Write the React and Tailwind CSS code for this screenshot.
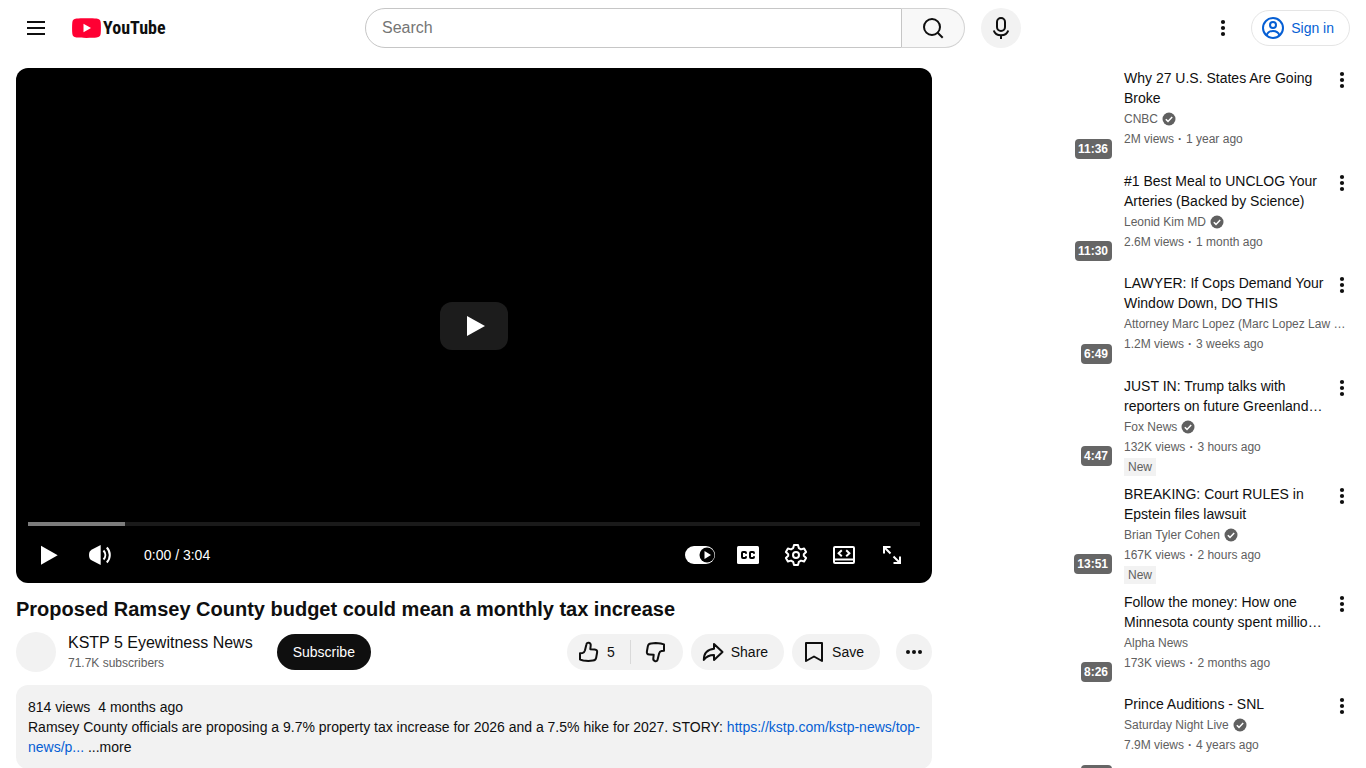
import clsx from 'clsx';

const videos = [
  { title: 'Why 27 U.S. States Are Going Broke', channel: 'CNBC', verified: true, views: '2M views', age: '1 year ago', time: '11:36' },
  { title: '#1 Best Meal to UNCLOG Your Arteries (Backed by Science)', channel: 'Leonid Kim MD', verified: true, views: '2.6M views', age: '1 month ago', time: '11:30' },
  { title: 'LAWYER: If Cops Demand Your Window Down, DO THIS', channel: 'Attorney Marc Lopez (Marc Lopez Law …', views: '1.2M views', age: '3 weeks ago', time: '6:49' },
  { title: 'JUST IN: Trump talks with reporters on future Greenland…', channel: 'Fox News', verified: true, views: '132K views', age: '3 hours ago', time: '4:47', isNew: true },
  { title: 'BREAKING: Court RULES in Epstein files lawsuit', channel: 'Brian Tyler Cohen', verified: true, views: '167K views', age: '2 hours ago', time: '13:51', isNew: true },
  { title: 'Follow the money: How one Minnesota county spent millio…', channel: 'Alpha News', views: '173K views', age: '2 months ago', time: '8:26' },
  { title: 'Prince Auditions - SNL', channel: 'Saturday Night Live', verified: true, views: '7.9M views', age: '4 years ago', time: '5:12' },
];

function Icon({ children, className }) {
  return (
    <svg viewBox="0 0 24 24" aria-hidden="true" className={clsx('w-6 h-6 shrink-0', className)} fill="none" stroke="currentColor" strokeWidth="2" strokeLinejoin="round">
      {children}
    </svg>
  );
}

function DotsIcon() {
  return (
    <Icon>
      <g fill="currentColor" stroke="none">
        <circle cx="12" cy="6" r="2.1" />
        <circle cx="12" cy="12" r="2.1" />
        <circle cx="12" cy="18" r="2.1" />
      </g>
    </Icon>
  );
}

function ThumbIcon({ className }) {
  return (
    <Icon className={className}>
      <path d="M3 13.2 5.500 12.900c1.400-.2 2-1 2.400-2.400L9.400 4.500C9.700 3 10.600 2.500 11.800 2.800c1.500.4 2.100 1.300 1.900 2.800L13.300 9.200l4.500.3c1.900.1 2.600 1.300 2.300 3l-.9 5.200c-.3 1.900-1.400 2.800-3.300 2.900l-4.600.3-5-.4-3.300-.9z" />
    </Icon>
  );
}

function Header() {
  return (
    <header className="flex items-center h-14 px-4">
      <div className="flex flex-1 items-center gap-4">
        <button aria-label="Guide" className="flex items-center justify-center w-10 h-10 rounded-full">
          <Icon><path d="M3 6h18M3 12h18M3 18h18" /></Icon>
        </button>
        <a href="#" className="flex items-center gap-0.5">
          <svg viewBox="0 0 29 20" aria-hidden="true" className="w-[29px] h-5">
            <path d="M4.500.5C8 0 21 0 24.500.5 27.500.8 28.400 2 28.700 4.500c.3 3 .3 8 0 11-.3 2.500-1.200 3.700-4.200 4-3.500.5-16.500.5-20 0-3-.3-3.900-1.500-4.200-4-.3-3-.3-8 0-11C.6 2 1.500.8 4.500.5z" fill="#ff0033" />
            <path d="M11.500 5.800v8.400L19 10z" fill="#fff" />
          </svg>
          <span className="font-['Roboto_Condensed','Open_Sans_Condensed','Noto_Sans_Condensed','Liberation_Sans',sans-serif] font-bold text-lg leading-5">YouTube</span>
        </a>
      </div>

      <div className="flex w-[676px] pl-5 gap-4">
        <form className="flex flex-1 h-10" onSubmit={(e) => e.preventDefault()}>
          <input
            aria-label="Search"
            placeholder="Search"
            className="flex-1 min-w-0 pl-4 pr-1 text-base border border-[#c6c6c6] rounded-l-full placeholder:text-[#757575] outline-none"
          />
          <button aria-label="Search" className="flex items-center justify-center w-[63px] bg-[#f8f8f8] border border-l-0 border-[#d3d3d3] rounded-r-full">
            <Icon><circle cx="11" cy="11" r="8" /><path d="m16.700 16.700 5 5" /></Icon>
          </button>
        </form>
        <button aria-label="Search with your voice" className="flex items-center justify-center w-10 h-10 rounded-full bg-[#f2f2f2]">
          <Icon>
            <rect x="8" y="2" width="8" height="13" rx="4" />
            <path d="M4.800 14.500c.9 3 3.800 4.800 7.200 4.800s6.300-1.800 7.200-4.800M12 19.300V23" />
          </Icon>
        </button>
      </div>

      <div className="flex flex-1 items-center justify-end gap-2">
        <button aria-label="Settings" className="flex items-center justify-center w-10 h-10"><DotsIcon /></button>
        <a href="#" className="flex items-center gap-1.5 h-9 pl-[9px] pr-[15px] border border-[#e5e5e5] rounded-full text-sm text-[#065fd4]">
          <Icon>
            <circle cx="12" cy="12" r="10" />
            <circle cx="12" cy="9" r="3" />
            <path d="M5.500 19.300c1-2.700 3.500-4.300 6.500-4.300s5.500 1.600 6.500 4.300" />
          </Icon>
          Sign in
        </a>
      </div>
    </header>
  );
}

function ControlButton({ label, children }) {
  return (
    <button aria-label={label} className="flex items-center justify-center w-12 h-12">
      <Icon>{children}</Icon>
    </button>
  );
}

function Player() {
  return (
    <div className="relative flex flex-col justify-end aspect-video px-3 pb-1 bg-black rounded-xl text-white">
      <button aria-label="Play" className="absolute inset-0 m-auto flex items-center justify-center w-[68px] h-12 rounded-xl bg-[#1c1c1c]">
        <svg viewBox="0 0 18 20" className="w-[18px] h-5 ml-1" fill="#fff"><path d="M0 0v20l18-10z" /></svg>
      </button>
      <div className="h-1 mb-[5px] bg-[#1a1a1a]">
        <div className="h-1 bg-[#7c7c7c]" style={{ width: '10.9%' }} />
      </div>
      <div className="flex items-center -ml-1 pr-1">
        <div className="flex flex-1 items-center gap-1">
          <ControlButton label="Play">
            <path d="M5 2.700v19l16.700-9.500z" fill="currentColor" stroke="none" />
          </ControlButton>
          <ControlButton label="Mute">
            <path d="M12.700 2v20L4 17.600C2 16.500 1 15 1 12s1-4.500 3-5.600z" fill="currentColor" stroke="none" />
            <path d="M15.500 7.500c2.400 2.600 2.400 6.400 0 9M18.800 4.500c4 4.400 4 10.600 0 15" />
          </ControlButton>
          <span className="pl-4 text-sm">0:00 / 3:04</span>
        </div>
        <button aria-label="Autoplay" className="flex items-center justify-center w-12 h-12">
          <svg viewBox="0 0 30 18" className="w-[30px] h-[18px]">
            <rect width="30" height="18" rx="9" fill="#fff" />
            <circle cx="22" cy="9" r="7.500" fill="#000" />
            <path d="M19.500 5v8l6.500-4z" fill="#fff" />
          </svg>
        </button>
        <ControlButton label="Subtitles">
          <rect x="1" y="3" width="22" height="18" rx="1.500" fill="currentColor" stroke="none" />
          <path d="M10 10.800V10q0-1-1-1H7q-1 0-1 1v4q0 1 1 1h2q1 0 1-1v-.8M18 10.800V10q0-1-1-1h-2q-1 0-1 1v4q0 1 1 1h2q1 0 1-1v-.8" stroke="#000" />
        </ControlButton>
        <ControlButton label="Settings">
          <path d="M10 2h4l.8 3.100 2.200 1.300 3.100-.9 2 3.500-2.300 2.200v1.600l2.300 2.200-2 3.500-3.100-.9-2.200 1.300L14 22h-4l-.8-3.100L7 17.600l-3.100.9-2-3.500 2.300-2.200v-1.600L1.900 9l2-3.500 3.100.9 2.200-1.300z" />
          <circle cx="12" cy="12" r="3" />
        </ControlButton>
        <ControlButton label="Theater mode">
          <rect x="2" y="4" width="20" height="16" rx="1" />
          <path d="M2 16.500h20M9.800 7.200 6.600 10.200l3.200 3M14.200 7.200l3.200 3-3.200 3" strokeLinejoin="miter" />
        </ControlButton>
        <ControlButton label="Full screen">
          <path d="M4 10.500V4h6.500M4 4l6.500 6.500M13.500 20H20v-6.500M20 20l-6.500-6.500" strokeLinejoin="miter" />
        </ControlButton>
      </div>
    </div>
  );
}

function PillButton({ label, children }) {
  return (
    <button className="flex items-center gap-1.5 h-9 pl-2.5 pr-4 rounded-full bg-[#f2f2f2] text-sm">
      <Icon>{children}</Icon>
      {label}
    </button>
  );
}

function WatchInfo() {
  return (
    <>
      <h1 className="mt-3 text-xl leading-7 font-bold">Proposed Ramsey County budget could mean a monthly tax increase</h1>
      <div className="flex items-center justify-between mt-[9px]">
        <div className="flex items-center">
          <a href="#" aria-label="KSTP 5 Eyewitness News" className="w-10 h-10 mr-3 rounded-full bg-[#f2f2f2]" />
          <div className="mr-6">
            <a href="#" className="block text-base leading-[22px]">KSTP 5 Eyewitness News</a>
            <p className="text-xs leading-[18px] text-[#606060]">71.7K subscribers</p>
          </div>
          <button className="h-9 px-4 rounded-full bg-[#0f0f0f] text-white text-sm">Subscribe</button>
        </div>

        {/* Actions */}
        <div className="flex items-center gap-2">
          <div className="flex items-center h-9 rounded-full bg-[#f2f2f2] text-sm">
            <button aria-label="Like, 5 likes" className="flex items-center gap-1.5 h-9 pl-2.5 pr-[15px]">
              <ThumbIcon />
              5
            </button>
            <span className="w-px h-6 bg-[#d9d9d9]" />
            <button aria-label="Dislike" className="h-9 pl-3 pr-4">
              <ThumbIcon className="rotate-180" />
            </button>
          </div>
          <PillButton label="Share">
            <path d="M13 4v4.800C6.500 9.500 2.800 13.500 2.800 20c2.500-3.500 5.500-5 10.200-5v5l8.500-8z" />
          </PillButton>
          <PillButton label="Save">
            <path d="M4 3h16v18l-8-4.500L4 21z" />
          </PillButton>
          <button aria-label="More actions" className="flex items-center justify-center w-9 h-9 ml-2 rounded-full bg-[#f2f2f2]">
            <Icon>
              <g fill="currentColor" stroke="none">
                <circle cx="6" cy="12" r="2" />
                <circle cx="12" cy="12" r="2" />
                <circle cx="18" cy="12" r="2" />
              </g>
            </Icon>
          </button>
        </div>
      </div>

      <div className="mt-[13px] p-3 rounded-xl bg-[#f2f2f2] text-sm leading-5">
        <p><span className="mr-2">814 views</span>4 months ago</p>
        <p>
          Ramsey County officials are proposing a 9.7% property tax increase for 2026 and a 7.5% hike for 2027. STORY:{' '}
          <a href="#" className="text-[#065fd4]">https://kstp.com/kstp-news/top-news/p...</a>{' '}
          <button>...more</button>
        </p>
      </div>
    </>
  );
}

function VideoItem({ video }) {
  return (
    <li className="flex items-start gap-2">
      <a href="#" aria-label={video.title} className="flex items-end justify-end w-[168px] aspect-video shrink-0 p-1">
        <span className="pl-[3px] pr-1 rounded bg-[#666] text-white text-xs leading-5 font-bold">{video.time}</span>
      </a>
      <div className="flex-1 min-w-0 text-xs leading-5 text-[#606060]">
        <div className="flex items-start -mr-1">
          <h3 className="flex-1 text-sm leading-5 text-[#0f0f0f]"><a href="#">{video.title}</a></h3>
          <button aria-label="More" className="-mb-1 text-[#0f0f0f]"><DotsIcon /></button>
        </div>
        <p className="flex items-center gap-1 mt-px whitespace-nowrap">
          {video.channel}
          {video.verified && (
            <svg viewBox="0 0 14 14" aria-label="Verified" className="w-3.5 h-3.5">
              <circle cx="7" cy="7" r="6.500" fill="#606060" />
              <path d="m3.800 7.200 2.200 2.200 4.200-4.400" fill="none" stroke="#fff" strokeWidth="1.500" />
            </svg>
          )}
        </p>
        <p>{video.views}<span className="mx-1 font-bold">·</span>{video.age}</p>
        {video.isNew && <span className="block w-fit px-1 mt-px leading-[18px] bg-[#f2f2f2]">New</span>}
      </div>
    </li>
  );
}

export default function App() {
  return (
    <div className="min-h-screen bg-white text-[#0f0f0f] font-['Liberation_Sans',Arial,sans-serif]">
      <Header />
      <div className="flex items-start gap-4 px-4 pt-3">
        <main className="flex-1 min-w-0">
          <Player />
          <WatchInfo />
        </main>
        <ul className="flex flex-col gap-2 w-[402px] shrink-0">
          {videos.map((video) => <VideoItem key={video.title} video={video} />)}
        </ul>
      </div>
    </div>
  );
}
